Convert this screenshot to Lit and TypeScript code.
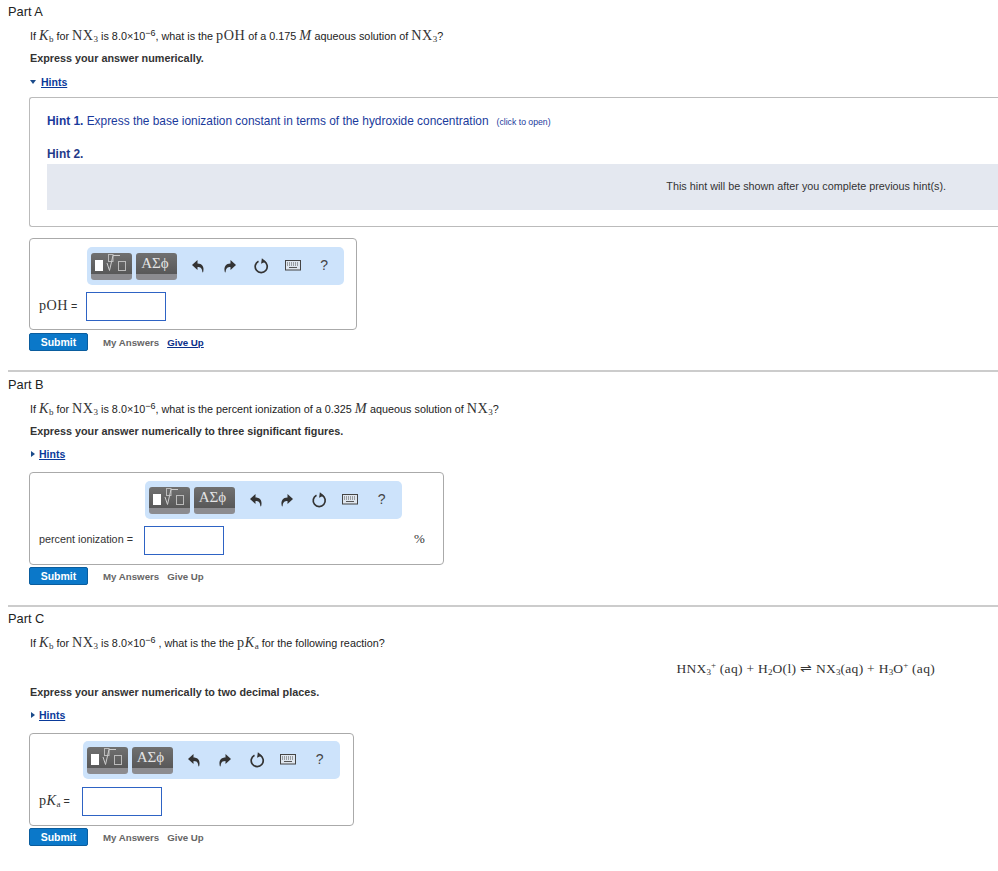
import { LitElement, html, css } from "lit";
import { customElement } from "lit/decorators.js";

const undo = html`<svg class="ic" viewBox="0 0 16 16" width="16" height="16"><path d="M7.500 2 2 7l5.500 5V9c3 0 4.500 1 4.900 5 .1.500.6.500.8 0C14.500 8.500 12 5.500 7.500 5.500Z" fill="#333"/></svg>`;
const redo = html`<svg class="ic" viewBox="0 0 16 16" width="16" height="16"><path d="M8.500 2 14 7l-5.500 5V9c-3 0-4.500 1-4.900 5-.1.500-.6.500-.8 0C1.500 8.500 4 5.500 8.500 5.500Z" fill="#333"/></svg>`;
const refresh = html`<svg class="ic" viewBox="0 0 16 16" width="16" height="16"><path d="M5.500 3.200a6 6 0 1 0 5.600.1" fill="none" stroke="#333" stroke-width="1.700"/><path d="M8.500 .5v5.500l4.500-3z" fill="#333" transform="rotate(8 10 3)"/></svg>`;
const keyboard = html`<svg class="ic" viewBox="0 0 16 12" width="16" height="12"><rect x=".5" y=".5" width="15" height="9.500" fill="#dfe6ee" stroke="#444"/><path d="M2 3h12M2 5h12" stroke="#555" stroke-dasharray="1 1"/><path d="M4 7.500h8" stroke="#555"/></svg>`;

const templates = html`<svg viewBox="0 0 41 27" width="41" height="27" class="glyph"><rect x="4" y="7" width="8" height="11" fill="#fff"/><rect x="17.500" y="1.500" width="4.500" height="7" fill="none" stroke="#bbb"/><path d="M16 10l2.500 7.500L22 2.500h7" fill="none" stroke="#ccc"/><rect x="27.500" y="8.500" width="7" height="9" fill="none" stroke="#bbb"/></svg>`;

@customElement("app-root")
export class AppRoot extends LitElement {
  static styles = css`
    :host { display: block; font-family: "Liberation Sans", Arial, sans-serif; color: #222; font-size: 10.800px; overflow: hidden; }
    .part { margin-left: 8px; }
    .part + .part { border-top: 2px solid #ccc; }
    .a { height: 370px; }
    .b { height: 233px; }
    .c { height: 264px; }
    .title { font-size: 12.800px; line-height: 14px; color: #222; }
    .a .title { padding-top: 5px; }
    .b .title { padding-top: 6px; }
    .c .title { padding-top: 5px; }
    .body { margin-left: 21px; }
    .q { line-height: 16px; margin-top: 8px; padding-left: 1px; display: block; white-space: nowrap; }
    .m { font-family: "Liberation Serif", "Times New Roman", serif; font-size: 14.200px; letter-spacing: .5px; color: #333; }
    .m sub { font-size: 9px; line-height: 0; vertical-align: -2px; letter-spacing: 0; }
    .m sup { font-size: 9px; line-height: 0; vertical-align: 5px; letter-spacing: 0; }
    .q > sup { font-size: 9px; line-height: 0; vertical-align: 4px; }
    .express { font-weight: bold; font-size: 10.800px; color: #333; line-height: 14px; margin-top: 7px; padding-left: 1px; }
    .c .express { margin-top: 8px; }
    .hints { display: flex; align-items: center; gap: 4px; line-height: 14px; margin-top: 9px; margin-left: 2px; }
    .a .hints { gap: 5px; margin-top: 10px; margin-left: 1px; }
    .hints a { color: #0a3a9a; font-weight: bold; text-decoration: underline; font-size: 10.500px; }
    .tri-down { width: 0; height: 0; border: 3px solid transparent; border-top: 4px solid #1a4a8a; border-bottom: 0; }
    .tri-right { width: 0; height: 0; border: 3px solid transparent; border-left: 4px solid #1a4a8a; border-right: 0; }
    .hintbox { box-sizing: border-box; margin-top: 8px; height: 130px; border: 1px solid #bbb; border-right: 0; border-radius: 3px 0 0 3px; padding: 16px 0 0 17px; }
    .hint1 { font-size: 11.900px; color: #1a3a9c; line-height: 14px; display: flex; align-items: baseline; gap: 8px; white-space: nowrap; }
    .hint1 small { font-size: 8.700px; }
    .hint2 { font-size: 11.900px; font-weight: bold; color: #1f3a8a; line-height: 14px; margin-top: 18px; }
    .locked { margin-top: 3px; height: 46px; box-sizing: border-box; padding-bottom: 2px; background: #e4e8f0; display: flex; align-items: center; justify-content: flex-end; padding-right: 52px; font-size: 10.800px; color: #333; }
    .answer { display: inline-grid; grid-template-columns: auto auto auto; margin-top: 11px; border: 1px solid #aaa; border-radius: 4px; padding: 8px 0 8px 9px; row-gap: 7px; align-items: center; background: #fff; vertical-align: top; }
    .b .answer { padding-bottom: 9px; }
    .c .answer { padding-top: 7px; padding-bottom: 9px; row-gap: 8px; }
    .toolbar { grid-column: 2; height: 38px; width: 257px; margin-left: 1px; background: #cde3fb; border-radius: 5px; display: flex; align-items: center; padding: 0 0 0 4px; box-sizing: border-box; }
    .tbtn { width: 41px; height: 27px; border-radius: 3px; background: linear-gradient(#707070 0, #585858 78%, #8c8c90 78%, #8c8c90 100%); color: #e4e4e4; margin-right: 4px; font-family: "Liberation Serif", serif; font-size: 15px; line-height: 21px; text-align: center; flex: none; box-sizing: border-box; padding-right: 4px; }
    .tbtn.tpl { padding-right: 0; }
    .glyph { display: block; }
    .icons { display: flex; align-items: center; flex: 1; padding-left: 1px; }
    .icons > span { width: 31.500px; display: flex; justify-content: center; font-size: 14px; color: #444; }
    .icons > .help { position: relative; top: -1px; }
    .ic { display: block; }
    .label { grid-column: 1; white-space: nowrap; font-size: 10.800px; padding-right: 9px; color: #333; margin-bottom: 3px; }
    .b .label { padding-right: 11px; }
    .c .label { padding-right: 12px; }
    .input { grid-column: 2; box-sizing: border-box; width: 80px; height: 29px; border: 1px solid #2e63c4; background: #fff; }
    .unit { grid-column: 3; padding: 0 18px 3px 12px; font-family: "Liberation Serif", serif; font-size: 13px; color: #333; }
    .spacer-a { grid-column: 3; width: 12px; }
    .spacer-c { grid-column: 3; width: 13px; }
    .actions { display: flex; align-items: center; margin-top: 3px; }
    .b .actions, .c .actions { margin-top: 2px; }
    .submit { width: 59px; height: 18px; box-sizing: border-box; background: #0b78c9; border: 1px solid #0a5d9e; border-radius: 2px; color: #fff; font-weight: bold; font-size: 10.500px; line-height: 16px; text-align: center; }
    .my { margin-left: 15px; color: #666; font-weight: bold; font-size: 9.700px; }
    .give { margin-left: 8px; color: #666; font-weight: bold; font-size: 9.700px; }
    .give.on { color: #0a2f8a; text-decoration: underline; }
    .formula { margin-top: 10px; line-height: 16px; padding-right: 63px; text-align: right; font-size: 13.500px; letter-spacing: .3px; color: #333; white-space: nowrap; }
  `;

  private kb = html`<span class="m"><i>K</i><sub>b</sub></span>`;
  private nx3 = html`<span class="m">NX<sub>3</sub></span>`;

  private answer(label: unknown, unit: unknown, spacer: string, giveOn: boolean) {
    return html`
      <div class="answer">
        <div class="toolbar">
          <div class="tbtn tpl">${templates}</div>
          <div class="tbtn">ΑΣϕ</div>
          <div class="icons">
            <span>${undo}</span><span>${redo}</span><span>${refresh}</span><span>${keyboard}</span><span class="help">?</span>
          </div>
        </div>
        <div class=${spacer}></div>
        <div class="label">${label}</div>
        <div class="input"></div>
        ${unit ? html`<div class="unit">${unit}</div>` : html`<div class=${spacer}></div>`}
      </div>
      <div class="actions">
        <div class="submit">Submit</div>
        <span class="my">My Answers</span>
        <span class=${giveOn ? "give on" : "give"}>Give Up</span>
      </div>
    `;
  }

  render() {
    return html`
      <section class="part a">
        <div class="title">Part A</div>
        <div class="body">
          <div class="q">If ${this.kb} for ${this.nx3} is 8.0×10<sup>−6</sup>, what is the <span class="m">pOH</span> of a 0.175 <span class="m"><i>M</i></span> aqueous solution of ${this.nx3}?</div>
          <div class="express">Express your answer numerically.</div>
          <div class="hints"><span class="tri-down"></span><a>Hints</a></div>
          <div class="hintbox">
            <div class="hint1"><span><b>Hint 1.</b> Express the base ionization constant in terms of the hydroxide concentration</span><small>(click to open)</small></div>
            <div class="hint2">Hint 2.</div>
            <div class="locked">This hint will be shown after you complete previous hint(s).</div>
          </div>
          ${this.answer(html`<span class="m">pOH</span> =`, null, "spacer-a", true)}
        </div>
      </section>
      <section class="part b">
        <div class="title">Part B</div>
        <div class="body">
          <div class="q">If ${this.kb} for ${this.nx3} is 8.0×10<sup>−6</sup>, what is the percent ionization of a 0.325 <span class="m"><i>M</i></span> aqueous solution of ${this.nx3}?</div>
          <div class="express">Express your answer numerically to three significant figures.</div>
          <div class="hints"><span class="tri-right"></span><a>Hints</a></div>
          ${this.answer("percent ionization =", "%", "spacer-a", false)}
        </div>
      </section>
      <section class="part c">
        <div class="title">Part C</div>
        <div class="body">
          <div class="q">If ${this.kb} for ${this.nx3} is 8.0×10<sup>−6</sup> , what is the the <span class="m">p<i>K</i><sub>a</sub></span> for the following reaction?</div>
          <div class="formula m">HNX<sub>3</sub><sup>+</sup>&nbsp;(aq) + H<sub>2</sub>O(l) ⇌ NX<sub>3</sub>(aq) + H<sub>3</sub>O<sup>+</sup>&nbsp;(aq)</div>
          <div class="express">Express your answer numerically to two decimal places.</div>
          <div class="hints"><span class="tri-right"></span><a>Hints</a></div>
          ${this.answer(html`<span class="m">p<i>K</i><sub>a</sub></span> =`, null, "spacer-c", false)}
        </div>
      </section>
    `;
  }
}
